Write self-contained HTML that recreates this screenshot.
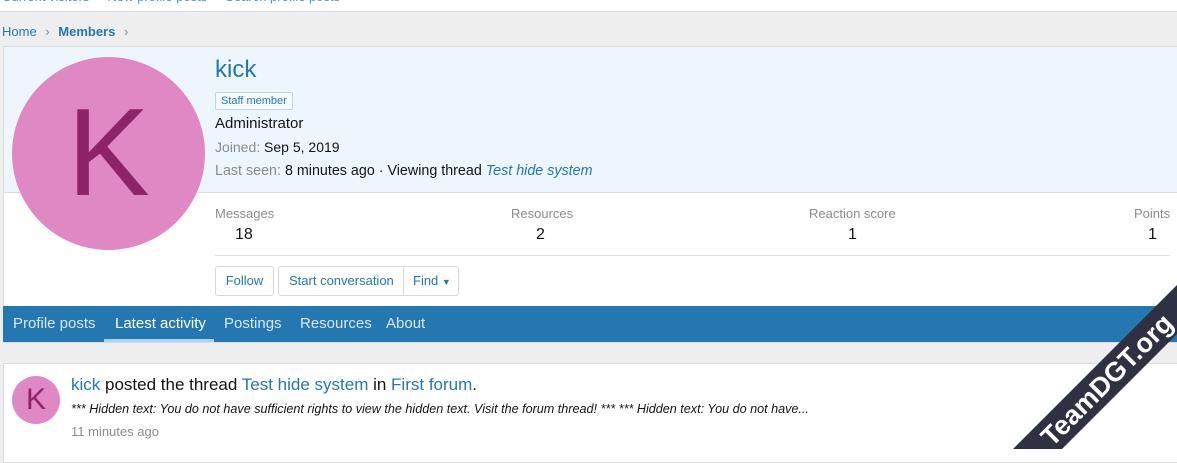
<!DOCTYPE html>
<html><head><meta charset="utf-8"><style>
*{box-sizing:border-box;margin:0;padding:0}
body{width:1177px;height:449px;overflow:hidden;background:#eeeeee;font-family:"Liberation Sans",sans-serif;color:#141414;position:relative}
.a{position:absolute;white-space:nowrap}
.blue{color:#2577b1}
.grey{color:#8c8c8c}
</style></head><body>
<div class="a" style="left:0;top:0;width:1177px;height:12px;background:#fff;border-bottom:1px solid #d8d8d8"></div>
<div class="a blue" style="left:2px;top:-11px;font-size:13px;opacity:.8">Current visitors &nbsp;&nbsp;&nbsp; New profile posts &nbsp;&nbsp;&nbsp; Search profile posts</div>
<div class="a" style="left:2px;top:24px;font-size:13px;color:#2577b1">Home <span style="color:#888;margin:0 5px">›</span> <b>Members</b> <span style="color:#888;margin-left:5px">›</span></div>

<div class="a" style="left:3px;top:46px;width:1180px;height:297px;background:#fff;border:1px solid #dcdcdc"></div>
<div class="a" style="left:4px;top:47px;width:1180px;height:146px;background:#edf6fd;border-bottom:1px solid #dcdcdc"></div>
<div class="a" style="left:12px;top:57px;width:193px;height:193px;border-radius:50%;background:#df88c3;color:#8e2468;font-size:124px;text-align:center;line-height:193px">K</div>
<div class="a blue" style="left:215px;top:56px;font-size:24px">kick</div>
<div class="a" style="left:215px;top:92px;height:18px;padding:0 5px;font-size:11px;line-height:16px;color:#2577b1;border:1px solid #b9d6ec;border-radius:2px;background:#f5faff">Staff member</div>
<div class="a" style="left:215px;top:115px;font-size:15px">Administrator</div>
<div class="a" style="left:215px;top:139px;font-size:14px"><span class="grey">Joined:</span> Sep 5, 2019</div>
<div class="a" style="left:215px;top:163px;font-size:14.3px"><span class="grey">Last seen:</span> 8 minutes ago · Viewing thread <i class="blue">Test hide system</i></div>

<div class="a grey" style="left:215px;top:206px;font-size:13px">Messages</div>
<div class="a" style="left:235px;top:226px;font-size:16px">18</div>
<div class="a grey" style="left:511px;top:206px;font-size:13px">Resources</div>
<div class="a" style="left:536px;top:226px;font-size:16px">2</div>
<div class="a grey" style="left:809px;top:206px;font-size:13px">Reaction score</div>
<div class="a" style="left:848px;top:226px;font-size:16px">1</div>
<div class="a grey" style="left:1134px;top:206px;font-size:13px">Points</div>
<div class="a" style="left:1148px;top:226px;font-size:16px">1</div>
<div class="a" style="left:215px;top:255px;width:955px;height:1px;background:#e0e0e0"></div>

<div class="a blue" style="left:215px;top:266px;width:59px;height:30px;border:1px solid #d8d8d8;border-radius:3px;font-size:13px;line-height:28px;text-align:center">Follow</div>
<div class="a blue" style="left:278px;top:266px;width:181px;height:30px;border:1px solid #d8d8d8;border-radius:3px;font-size:13px;line-height:28px">
<span style="position:absolute;left:10px">Start conversation</span>
<span style="position:absolute;left:124px;top:0;width:1px;height:28px;background:#d8d8d8"></span>
<span style="position:absolute;left:134px">Find <span style="font-size:9px">▼</span></span></div>

<div class="a" style="left:3px;top:306px;width:1180px;height:36px;background:#2577b1"></div>
<div class="a" style="left:13px;top:315px;font-size:15px;color:#d8e8f5">Profile posts</div>
<div class="a" style="left:115px;top:315px;font-size:15px;color:#fff">Latest activity</div>
<div class="a" style="left:104px;top:339px;width:110px;height:3px;background:#a8d3f2"></div>
<div class="a" style="left:224px;top:315px;font-size:15px;color:#d8e8f5">Postings</div>
<div class="a" style="left:300px;top:315px;font-size:15px;color:#d8e8f5">Resources</div>
<div class="a" style="left:386px;top:315px;font-size:15px;color:#d8e8f5">About</div>

<div class="a" style="left:3px;top:363px;width:1180px;height:100px;background:#fff;border:1px solid #dcdcdc"></div>
<div class="a" style="left:12px;top:376px;width:48px;height:48px;border-radius:50%;background:#df88c3;color:#8e2468;font-size:30px;text-align:center;line-height:48px">K</div>
<div class="a" style="left:71px;top:375px;font-size:17px"><span class="blue">kick</span> posted the thread <span class="blue">Test hide system</span> in <span class="blue">First forum</span>.</div>
<div class="a" style="left:71px;top:402px;font-size:12.6px;font-style:italic">*** Hidden text: You do not have sufficient rights to view the hidden text. Visit the forum thread! *** *** Hidden text: You do not have...</div>
<div class="a grey" style="left:71px;top:424px;font-size:13px">11 minutes ago</div>

<svg class="a" style="left:0;top:0" width="1177" height="449"><polygon points="1013,449 1062,449 1177,334 1177,285" fill="#2d3142"/></svg>
<div class="a" style="left:1107px;top:380px;transform:translate(-50%,-50%) rotate(-45deg);font-size:27px;font-weight:bold;color:#fff;line-height:30px">TeamDGT.org</div>
</body></html>
